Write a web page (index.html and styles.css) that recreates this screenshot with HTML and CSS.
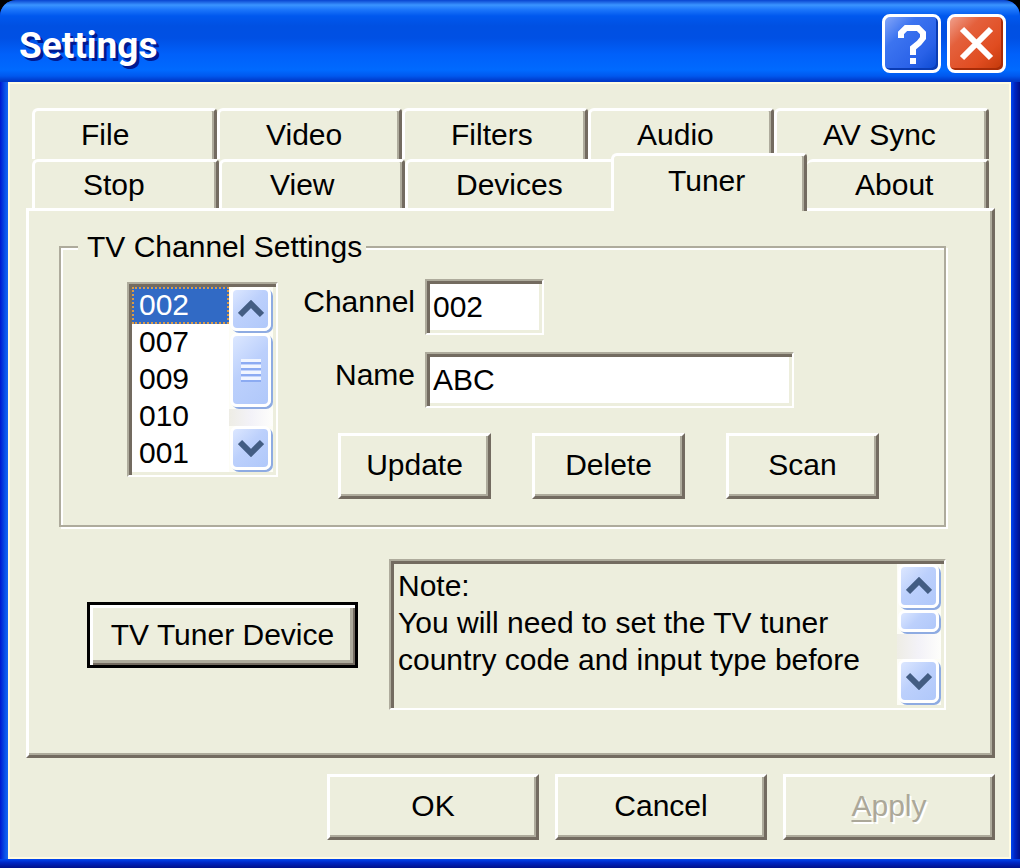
FILE: index.html
```html
<!DOCTYPE html>
<html lang="en">
<head>
<meta charset="utf-8">
<title>Settings</title>
<link rel="stylesheet" href="styles.css">
</head>
<body>
<main class="window">
  <header class="titlebar">
    <h1 class="title">Settings</h1>
    <button class="caption-button help" type="button" aria-label="Help">
      <svg viewBox="0 0 53 53" fill="none" stroke="#fff" stroke-width="6"><path d="M16 21V16L21 11H33L38 16V21L34 26L28 31V38"/><path d="M25 44H31"/></svg>
    </button>
    <button class="caption-button close" type="button" aria-label="Close">
      <svg viewBox="0 0 53 53" fill="none" stroke="#fff" stroke-width="6"><path d="M12 12L41 41M41 12L12 41"/></svg>
    </button>
  </header>
  <div class="client">
    <div class="tabs" role="tablist">
      <div class="tab-row tab-row-back">
        <button class="tab" type="button" role="tab">File</button>
        <button class="tab" type="button" role="tab">Video</button>
        <button class="tab" type="button" role="tab">Filters</button>
        <button class="tab" type="button" role="tab">Audio</button>
        <button class="tab" type="button" role="tab">AV Sync</button>
      </div>
      <div class="tab-row tab-row-front">
        <button class="tab" type="button" role="tab">Stop</button>
        <button class="tab" type="button" role="tab">View</button>
        <button class="tab tab-covered" type="button" role="tab">Devices</button>
        <button class="tab tab-active" type="button" role="tab" aria-selected="true">Tuner</button>
        <button class="tab tab-after" type="button" role="tab">About</button>
      </div>
    </div>
    <section class="panel" role="tabpanel">
      <fieldset class="group">
        <legend>TV Channel Settings</legend>
        <div class="group-content">
          <div class="sunken channel-list">
            <select class="channels" size="5" aria-label="Channels">
              <option selected>002</option>
              <option>007</option>
              <option>009</option>
              <option>010</option>
              <option>001</option>
            </select>
            <div class="scrollbar">
              <button class="scroll-part scroll-arrow" type="button" aria-label="Scroll up"><svg viewBox="0 0 26 18"><path d="M2 15L13 4L24 15" fill="none" stroke="#435d83" stroke-width="6"/></svg></button>
              <div class="scroll-part thumb thumb-long"><span class="grip"></span></div>
              <div class="track"></div>
              <button class="scroll-part scroll-arrow" type="button" aria-label="Scroll down"><svg viewBox="0 0 26 18"><path d="M2 3L13 14L24 3" fill="none" stroke="#435d83" stroke-width="6"/></svg></button>
            </div>
          </div>
          <div class="editor">
            <div class="fields">
              <label for="channel">Channel</label>
              <input class="sunken text-box channel-box" id="channel" type="text" value="002">
              <label for="name">Name</label>
              <input class="sunken text-box" id="name" type="text" value="ABC">
            </div>
            <div class="actions">
              <button class="button" type="button">Update</button>
              <button class="button" type="button">Delete</button>
              <button class="button" type="button">Scan</button>
            </div>
          </div>
        </div>
      </fieldset>
      <div class="device-row">
        <button class="button button-default" type="button">TV Tuner Device</button>
        <div class="sunken note">
          <textarea class="note-text" aria-label="Note" readonly rows="3">Note:
You will need to set the TV tuner
country code and input type before</textarea>
          <div class="scrollbar">
            <button class="scroll-part scroll-arrow" type="button" aria-label="Scroll up"><svg viewBox="0 0 26 18"><path d="M2 15L13 4L24 15" fill="none" stroke="#435d83" stroke-width="6"/></svg></button>
            <div class="scroll-part thumb"></div>
            <div class="track"></div>
            <button class="scroll-part scroll-arrow" type="button" aria-label="Scroll down"><svg viewBox="0 0 26 18"><path d="M2 3L13 14L24 3" fill="none" stroke="#435d83" stroke-width="6"/></svg></button>
          </div>
        </div>
      </div>
    </section>
    <footer class="footer">
      <button class="button" type="button">OK</button>
      <button class="button" type="button">Cancel</button>
      <button class="button" type="button" disabled><u>A</u>pply</button>
    </footer>
  </div>
</main>
</body>
</html>
```
FILE: styles.css
```css
:root {
  --face: #edeedd;
  --light: #ffffff;
  --shadow: #aeab9c;
  --dark: #736b60;
}

* {
  box-sizing: border-box;
}

body {
  margin: 0;
  background: #000;
  color: #000;
  font: 30px/36px "Liberation Sans", Arial, sans-serif;
}

button,
input,
select,
textarea {
  margin: 0;
  color: inherit;
  font: inherit;
}

.window {
  display: flex;
  flex-direction: column;
  min-height: 100vh;
  padding: 0 9px 9px 8px;
  border-radius: 16px 16px 0 0;
  background:
    linear-gradient(#0046f0, #0026c4 40%, #00108a) bottom / 100% 9px no-repeat,
    linear-gradient(90deg, #0019cf, #0a50e8 60%, #1668f4) left / 8px 100% no-repeat,
    linear-gradient(90deg, #0046f0, #0026c4 40%, #00108a) right / 9px 100% no-repeat;
  overflow: hidden;
}

.titlebar {
  display: flex;
  align-items: center;
  gap: 6px;
  height: 82px;
  margin: 0 -9px 0 -8px;
  padding: 5px 14px 0 19px;
  background: linear-gradient(#0844d0, #3a94ff 5px, #1a74fa 10px, #0058ee 16px, #0050e2 26px, #0050e4 38px, #0060fa 54px, #006aff 70px, #0058ee 76px, #0038c8 81px);
}

.title {
  flex: 1;
  margin: 0;
  padding-top: 5px;
  color: #fff;
  font: bold 37px/42px Roboto, sans-serif;
  text-shadow: 3px 3px #001a90;
}

.caption-button {
  width: 59px;
  height: 59px;
  padding: 0;
  border: 3px solid #fff;
  border-radius: 8px;
}

.caption-button svg {
  display: block;
  width: 53px;
  height: 53px;
}

.help {
  background: linear-gradient(135deg, #84a6f8, #3c74f0 30%, #2a62e8 70%, #0a48d0);
  box-shadow: inset -2px -2px #0a3cb4;
}

.close {
  background: linear-gradient(135deg, #f0a08c, #e4603c 30%, #e04c20 70%, #c03808);
  box-shadow: inset -2px -2px #a82c08;
}

.client {
  display: flex;
  flex: 1;
  flex-direction: column;
  padding: 24px 14px 17px 16px;
  border: 2px solid #fffbe2;
  background: var(--face);
}

.tabs {
  padding: 0 6px;
}

.tab-row {
  display: grid;
}

.tab-row-back {
  grid-template-columns: 185fr 185fr 186fr 186fr 215fr;
  height: 51px;
}

.tab-row-front {
  grid-template-columns: 187fr 186fr 209fr 193fr 182fr;
  height: 49px;
}

.tab {
  padding: 0 0 0 46px;
  border: solid;
  border-width: 3px 3px 0;
  border-color: var(--light) var(--dark) var(--light) var(--light);
  border-radius: 6px 4px 0 0;
  background: var(--face);
  box-shadow: inset -2px 0 var(--shadow);
  text-align: left;
}

.tab-row-front .tab {
  padding-left: 48px;
}

.tab-row-front .tab-covered {
  border-right: 0;
  box-shadow: none;
}

.tab-row-front .tab-active {
  z-index: 1;
  margin: -6px 0 -3px -3px;
  padding: 0 0 6px 54px;
}

.tab-row-front .tab-after {
  border-left: 0;
}

.panel {
  flex: 1;
  padding: 18px 46px 45px 30px;
  border: solid;
  border-width: 3px;
  border-color: var(--light) var(--dark) var(--dark) var(--light);
  box-shadow: inset -2px -2px var(--shadow);
}

.group {
  min-width: 0;
  margin: 0;
  padding: 14px 60px 26px 66px;
  border: 2px solid var(--shadow);
  box-shadow: 2px 2px var(--light), inset 2px 2px var(--light);
}

.group legend {
  margin-left: -49px;
  padding: 0 4px 0 9px;
  background: var(--face);
}

.group-content {
  display: flex;
  align-items: flex-start;
  gap: 22px;
}

.sunken {
  padding: 3px;
  border: 2px solid;
  border-color: var(--shadow) var(--light) var(--light) var(--shadow);
  border-radius: 0;
  box-shadow: inset 3px 3px var(--dark), inset -3px -3px var(--face);
  outline: 0;
}

.channel-list {
  display: flex;
  margin-top: 3px;
}

.channels {
  width: 97px;
  border: 0;
  border-radius: 0;
  padding: 0;
  background: #fff;
  outline: 0;
  overflow: hidden;
  scrollbar-width: none;
}

.channels option {
  min-height: 37px;
  padding: 1px 7px 0;
  line-height: 36px;
}

.channels option:checked {
  outline: 2px dotted #d89a48;
  outline-offset: -2px;
  background: #316ac5 linear-gradient(#316ac5, #316ac5);
  color: #fff;
}

.scrollbar {
  display: flex;
  flex-direction: column;
  width: 44px;
  background: #fdfdf6;
}

.scroll-part {
  display: flex;
  align-items: center;
  justify-content: center;
  margin: 0 2px 2px 1px;
  padding: 0;
  border: 3px solid #fff;
  border-radius: 7px;
  background: linear-gradient(135deg, #dce7ff, #bcd0fc 45%, #b0c8fa);
  box-shadow: 2px 2px #8eabe2;
}

.scroll-arrow {
  height: 44px;
}

.scroll-arrow svg {
  width: 26px;
  height: 18px;
}

.thumb {
  height: 22px;
}

.thumb-long {
  height: 74px;
}

.grip {
  width: 20px;
  height: 23px;
  background: repeating-linear-gradient(#f0f5ff 0 3px, #8cabf2 3px 5px, #c2d4fc 5px 6px);
}

.track {
  flex: 1;
  background: linear-gradient(90deg, #eeede5, #f3f2f8 50%, #fefefb);
}

.editor {
  flex: 1;
}

.fields {
  display: grid;
  grid-template-columns: 115px minmax(0, 369px);
  gap: 17px 10px;
}

.fields label {
  padding-top: 5px;
  text-align: right;
}

.text-box {
  width: 100%;
  height: 56px;
  padding-left: 6px;
  background: #fff;
}

.channel-box {
  width: 119px;
}

.actions {
  display: flex;
  gap: 41px;
  margin: 25px 0 0 38px;
}

.button {
  height: 66px;
  padding: 0 12px 2px;
  border: 3px solid;
  border-color: var(--light) var(--dark) var(--dark) var(--light);
  border-radius: 0;
  background: var(--face);
  box-shadow: inset -2px -2px var(--shadow);
}

.actions .button {
  width: 153px;
}

.button-default {
  width: 271px;
  padding: 0;
  border-color: #000;
  box-shadow: inset 3px 3px var(--light), inset -2px -2px var(--dark), inset -5px -5px var(--shadow);
}

.button:disabled {
  color: #aca899;
  text-shadow: 2px 2px #fff;
}

.button u {
  text-decoration-thickness: 2px;
  text-underline-offset: 4px;
}

.device-row {
  display: flex;
  align-items: center;
  gap: 31px;
  margin-top: 32px;
  padding-left: 28px;
}

.note {
  display: flex;
  flex: 1;
  height: 151px;
}

.note-text {
  flex: 1;
  min-width: 0;
  padding: 3px 0 0 4px;
  border: 0;
  outline: 0;
  background: var(--face);
  line-height: 37px;
  overflow: hidden;
  resize: none;
}

.footer {
  display: grid;
  grid-template-columns: repeat(3, 212px);
  gap: 16px;
  justify-content: end;
  margin-top: 16px;
}
```
